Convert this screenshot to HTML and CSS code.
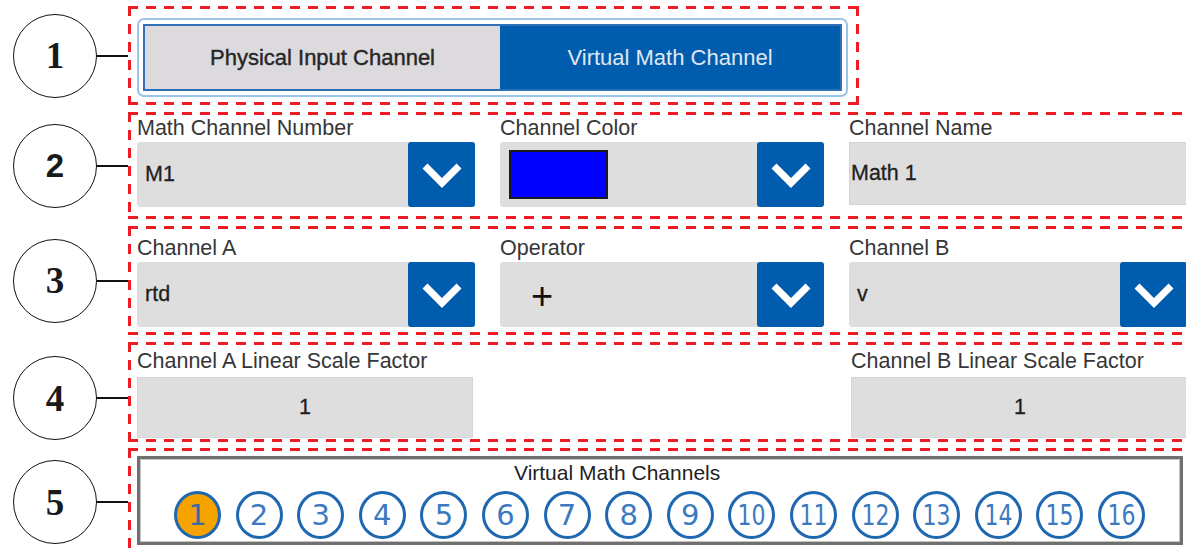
FILE: index.html
```html
<!DOCTYPE html>
<html lang="en">
<head>
<meta charset="UTF-8">
<meta name="viewport" content="width=device-width, initial-scale=1.0">
<title>Virtual Math Channel Setup</title>
<link rel="stylesheet" href="styles.css">
</head>
<body>
    <div class="sheet">
        <div class="row row-mode">
            <div class="callout"><span class="badge">1</span><span class="leader"></span></div>
            <section class="zone zone-mode">
                <div class="mode-toggle">
                    <div class="mode-track">
                        <span class="mode-option">Physical Input Channel</span>
                        <span class="mode-option is-active">Virtual Math Channel</span>
                    </div>
                </div>
            </section>
        </div>

        <div class="row row-ident">
            <div class="callout"><span class="badge badge-sans">2</span><span class="leader"></span></div>
            <section class="zone zone-ident">
                <div class="fields">
                    <div class="field">
                        <span class="field-label">Math Channel Number</span>
                        <div class="control">
                            <span class="control-value">M1</span>
                            <span class="drop-btn"><svg width="42" height="26" viewBox="0 0 42 26"><polyline points="4,4 21,21 38,4" fill="none" stroke="#fff" stroke-width="7"/></svg></span>
                        </div>
                    </div>
                    <div class="field">
                        <span class="field-label">Channel Color</span>
                        <div class="control">
                            <span class="control-value"><span class="swatch"></span></span>
                            <span class="drop-btn"><svg width="42" height="26" viewBox="0 0 42 26"><polyline points="4,4 21,21 38,4" fill="none" stroke="#fff" stroke-width="7"/></svg></span>
                        </div>
                    </div>
                    <div class="field">
                        <span class="field-label">Channel Name</span>
                        <div class="control control-text">
                            <span class="control-value">Math 1</span>
                        </div>
                    </div>
                </div>
            </section>
        </div>

        <div class="row row-formula">
            <div class="callout"><span class="badge">3</span><span class="leader"></span></div>
            <section class="zone zone-formula">
                <div class="fields">
                    <div class="field">
                        <span class="field-label">Channel A</span>
                        <div class="control">
                            <span class="control-value">rtd</span>
                            <span class="drop-btn"><svg width="42" height="26" viewBox="0 0 42 26"><polyline points="4,4 21,21 38,4" fill="none" stroke="#fff" stroke-width="7"/></svg></span>
                        </div>
                    </div>
                    <div class="field">
                        <span class="field-label">Operator</span>
                        <div class="control">
                            <span class="control-value operator">+</span>
                            <span class="drop-btn"><svg width="42" height="26" viewBox="0 0 42 26"><polyline points="4,4 21,21 38,4" fill="none" stroke="#fff" stroke-width="7"/></svg></span>
                        </div>
                    </div>
                    <div class="field">
                        <span class="field-label">Channel B</span>
                        <div class="control">
                            <span class="control-value">v</span>
                            <span class="drop-btn"><svg width="42" height="26" viewBox="0 0 42 26"><polyline points="4,4 21,21 38,4" fill="none" stroke="#fff" stroke-width="7"/></svg></span>
                        </div>
                    </div>
                </div>
            </section>
        </div>

        <div class="row row-scale">
            <div class="callout"><span class="badge">4</span><span class="leader"></span></div>
            <section class="zone zone-scale">
                <div class="fields fields-scale">
                    <div class="field">
                        <span class="field-label">Channel A Linear Scale Factor</span>
                        <div class="control control-number">1</div>
                    </div>
                    <div class="field">
                        <span class="field-label">Channel B Linear Scale Factor</span>
                        <div class="control control-number">1</div>
                    </div>
                </div>
            </section>
        </div>

        <div class="row row-list">
            <div class="callout"><span class="badge">5</span><span class="leader"></span></div>
            <section class="zone zone-list">
                <div class="channel-group">
                    <div class="group-title">Virtual Math Channels</div>
                    <div class="channel-list">
                        <span class="channel-dot is-current">1</span>
                        <span class="channel-dot">2</span>
                        <span class="channel-dot">3</span>
                        <span class="channel-dot">4</span>
                        <span class="channel-dot">5</span>
                        <span class="channel-dot">6</span>
                        <span class="channel-dot">7</span>
                        <span class="channel-dot">8</span>
                        <span class="channel-dot">9</span>
                        <span class="channel-dot"><span class="wide">10</span></span>
                        <span class="channel-dot"><span class="wide">11</span></span>
                        <span class="channel-dot"><span class="wide">12</span></span>
                        <span class="channel-dot"><span class="wide">13</span></span>
                        <span class="channel-dot"><span class="wide">14</span></span>
                        <span class="channel-dot"><span class="wide">15</span></span>
                        <span class="channel-dot"><span class="wide">16</span></span>
                    </div>
                </div>
            </section>
        </div>
    </div>
</body>
</html>
```

FILE: styles.css
```css
* {
    margin: 0;
    padding: 0;
    box-sizing: border-box;
}
body {
    font-family: 'Liberation Sans', Arial, sans-serif;
    background-color: #fff;
    width: 1186px;
    height: 552px;
    overflow: hidden;
}
.sheet {
    display: flex;
    flex-direction: column;
    width: 1220px;
}
.row {
    display: flex;
    align-items: center;
}
.row-mode {
    margin-top: 6px;
}
.row-ident,
.row-formula,
.row-scale {
    margin-top: 7px;
}
.row-list {
    margin-top: 6px;
    align-items: flex-start;
}

/* callout bubbles on the left */
.callout {
    flex: none;
    width: 128px;
    display: flex;
    align-items: center;
}
.row-scale .callout {
    padding-top: 12px;
}
.row-list .callout {
    margin-top: 12px;
}
.badge {
    flex: none;
    width: 84px;
    height: 84px;
    margin-left: 13px;
    border: 1.5px solid #111;
    border-radius: 50%;
    display: flex;
    align-items: center;
    justify-content: center;
    font-family: 'Liberation Serif', 'Times New Roman', serif;
    font-weight: bold;
    font-size: 37px;
    color: #1a1a1a;
}
.badge-sans {
    font-family: 'Liberation Sans', Arial, sans-serif;
    font-size: 33px;
}
.leader {
    flex: 1;
    height: 2px;
    background-color: #111;
}

/* red dashed annotation frames */
.zone {
    flex: none;
    width: 1080px;
    padding-left: 9px;
    background:
        repeating-linear-gradient(90deg, #ed1c24 0 10px, transparent 10px 18px) top left / 100% 3px no-repeat,
        repeating-linear-gradient(90deg, #ed1c24 0 10px, transparent 10px 18px) bottom left / 100% 3px no-repeat,
        repeating-linear-gradient(180deg, #ed1c24 0 10px, transparent 10px 18px) top left / 3px 100% no-repeat,
        repeating-linear-gradient(180deg, #ed1c24 0 10px, transparent 10px 18px) top right / 3px 100% no-repeat;
}
.zone-mode {
    width: 731px;
    height: 99px;
    padding-top: 12px;
}
.zone-ident {
    height: 107px;
    padding-top: 4px;
}
.zone-formula {
    height: 109px;
    padding-top: 10px;
}
.zone-scale {
    height: 100px;
    padding-top: 7px;
}
.zone-list {
    height: 112px;
    padding-top: 8px;
}

/* mode toggle */
.mode-toggle {
    width: 711px;
    height: 79px;
    padding: 4px;
    border: 2px solid #9cc3e8;
    border-radius: 7px;
}
.mode-track {
    display: flex;
    height: 100%;
    border: 2px solid #2f70b7;
}
.mode-option {
    width: 355px;
    display: flex;
    align-items: center;
    justify-content: center;
    font-size: 22px;
    color: #262626;
    background-color: #dcdadd;
    -webkit-text-stroke: 0.4px #262626;
}
.mode-option.is-active {
    flex: 1;
    background-color: #005cad;
    color: #e1e7f2;
    -webkit-text-stroke: 0;
}

/* form fields */
.fields {
    display: grid;
    grid-template-columns: 338px 324px 338px;
    column-gap: 25px;
}
.fields-scale {
    grid-template-columns: 336px 338px;
    column-gap: 378px;
}
.field-label {
    display: block;
    font-size: 21.5px;
    line-height: 24px;
    margin-bottom: 2px;
    color: #363636;
    white-space: nowrap;
}
.zone-scale .field-label {
    margin-bottom: 4px;
}
.control {
    display: flex;
    align-items: center;
    height: 65px;
    background-color: #dedede;
    border-radius: 3px;
    font-size: 21.5px;
    color: #1e1e1e;
    -webkit-text-stroke: 0.3px #1e1e1e;
}
.control-value {
    flex: 1;
    display: flex;
    align-items: center;
    padding-left: 8px;
}
.control-text {
    height: 63px;
    margin-top: 1px;
    border-radius: 0;
    border: 1px solid #d3d3d3;
}
.control-text .control-value {
    padding-left: 1px;
}
.operator {
    padding-left: 31px;
    padding-top: 4px;
    font-size: 38px;
    -webkit-text-stroke: 0;
    color: #111;
}
.swatch {
    display: block;
    width: 99px;
    height: 49px;
    margin-left: 1px;
    background-color: #0000ff;
    border: 2px solid #1a1a1a;
}
.drop-btn {
    flex: none;
    width: 67px;
    align-self: stretch;
    display: flex;
    align-items: center;
    justify-content: center;
    background-color: #005cad;
    border-radius: 3px;
}
.control-number {
    height: 61px;
    justify-content: center;
    border-radius: 0;
    border: 1px solid #d6d6d6;
}

/* channel selector */
.channel-group {
    width: 1046px;
    height: 89px;
    border: 3px solid #6f6f6f;
    box-shadow: inset 0 0 0 1px #c4c4c4;
}
.group-title {
    margin: 2px 0 0 374px;
    font-size: 21px;
    line-height: 24px;
    color: #222;
}
.channel-list {
    display: flex;
    gap: 14.6px;
    margin-top: 6px;
    padding-left: 34px;
}
.channel-dot {
    flex: none;
    width: 47px;
    height: 48px;
    border: 3px solid #1f68b1;
    border-radius: 50%;
    display: flex;
    align-items: center;
    justify-content: center;
    font-family: 'DejaVu Sans', sans-serif;
    font-size: 29px;
    line-height: 1;
    color: #3b7ac0;
}
.channel-dot.is-current {
    background-color: #f6a300;
    color: #3d6c9d;
}
.wide {
    display: inline-block;
    transform: scaleX(0.76);
}
```
